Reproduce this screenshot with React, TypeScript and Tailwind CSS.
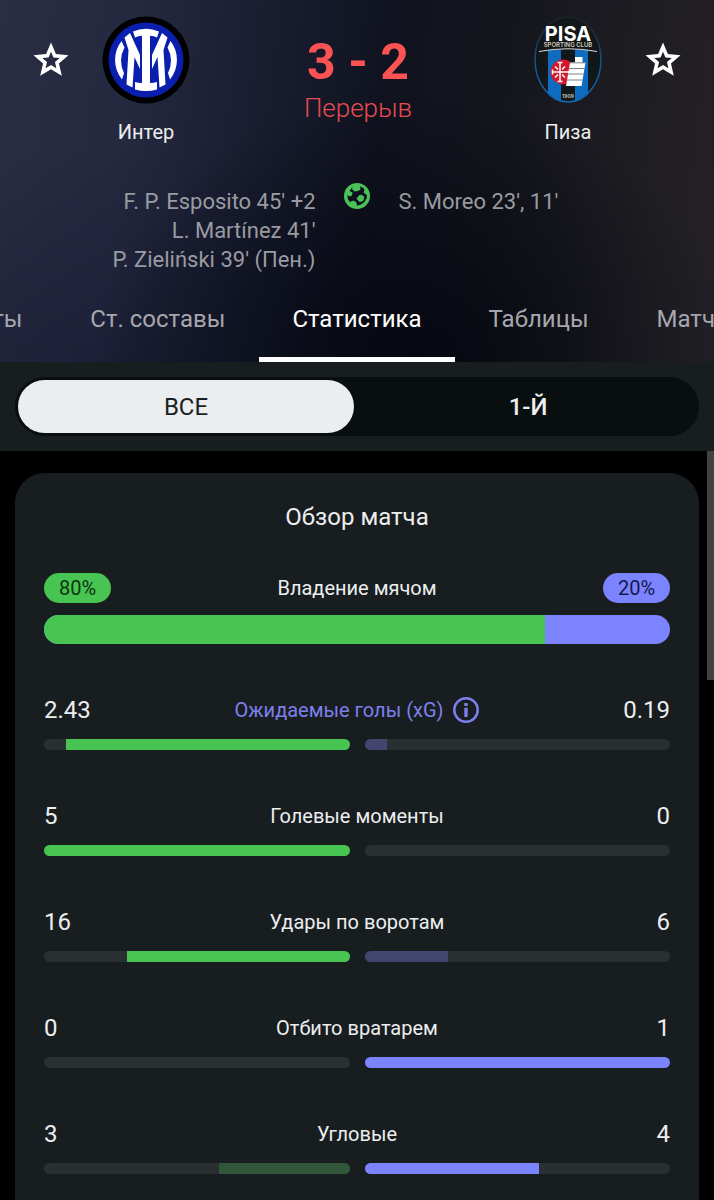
import React, { useState } from 'react';

type Stat = { label: string; home: string; away: string; info?: boolean };

const scorersHome = ["F. P. Esposito 45' +2", "L. Martínez 41'", "P. Zieliński 39' (Пен.)"];
const scorersAway = ["S. Moreo 23', 11'"];

const stats: Stat[] = [
  { label: 'Ожидаемые голы (xG)', home: '2.43', away: '0.19', info: true },
  { label: 'Голевые моменты', home: '5', away: '0' },
  { label: 'Удары по воротам', home: '16', away: '6' },
  { label: 'Отбито вратарем', home: '0', away: '1' },
  { label: 'Угловые', home: '3', away: '4' },
];

function InterLogo() {
  return (
    <svg viewBox="0 0 88 88" className="size-[88px]" aria-hidden="true">
      <circle cx="44" cy="44" r="43.5" fill="#000" />
      <circle cx="44" cy="44" r="37.5" fill="#0a1fae" />
      <g fill="#fff">
        <path d="M31 15.5Q44 10 57 15.5L55 21.5Q52 20 48 19.8V67Q52 67 55 66V73.500Q44 76.500 33 73.500V66Q36 67 40 67V19.800Q36 20 33 21.500Z" />
        <path d="M22.500 21.500L28 17L38 39V53L32.500 41L30.500 71.500L24.500 68.500L26.500 34Z" />
        <path d="M65.500 21.500L60 17L50 39V53L55.500 41L57.500 71.500L63.500 68.500L61.500 34Z" />
        <path d="M19.500 25A31 31 0 0 0 20 63.500L22 57A28 28 0 0 1 22.500 31.500Z" />
        <path d="M68.500 25A31 31 0 0 1 68 63.500L66 57A28 28 0 0 0 65.500 31.500Z" />
      </g>
    </svg>
  );
}

function PisaLogo() {
  return (
    <svg viewBox="0 0 68 88" className="h-[88px] w-[68px]" aria-hidden="true">
      <defs>
        <clipPath id="pisa-shield">
          <ellipse cx="34" cy="43.5" rx="33" ry="42.5" />
        </clipPath>
        <linearGradient id="pisa-edge" x1="0" y1="0" x2="0" y2="1">
          <stop offset="0" stopColor="#1d2427" />
          <stop offset="0.3" stopColor="#1a3a55" />
          <stop offset="0.55" stopColor="#14558d" />
          <stop offset="1" stopColor="#0f6bb8" />
        </linearGradient>
      </defs>
      <g clipPath="url(#pisa-shield)">
        <rect width="68" height="88" fill="#121719" />
        <path d="M14 34H27V88H14ZM41 34H54V88H41Z" fill="#0d6cc0" />
      </g>
      <ellipse cx="34" cy="43.5" rx="33" ry="42.5" fill="none" stroke="url(#pisa-edge)" strokeWidth="1.5" />
      <path d="M5 35.500Q34 30 63 35.500" fill="none" stroke="#d9dcdc" strokeWidth="1" />
      <text x="34" y="25" textAnchor="middle" fontFamily="Inter, sans-serif" fontWeight="700" fontSize="20" fill="#fff">PISA</text>
      <text x="34" y="31" textAnchor="middle" fontFamily="Inter, sans-serif" fontWeight="600" fontSize="6" fill="#d3cdbc">SPORTING CLUB</text>
      <circle cx="29" cy="56" r="12.500" fill="#d3182c" />
      <path d="M26 46V66M18 56H35M23.500 46.500H28.500M23.500 65.500H28.500M18.500 53.500V58.500M21 50.500L24 53.500M21 61.500L24 58.500M28 53.500L31 50.500M28 58.500L31 61.500" fill="none" stroke="#fff" strokeWidth="1.500" />
      <path d="M32 70L36 46.500L41 46V41H48.500V46.500H51.500L47.500 70Z" fill="#fff" />
      <path d="M36 46.800H51M34.500 52.500H50.500M33.500 58H49.500M32.500 64H48.500" stroke="#5d6466" strokeWidth="0.8" />
      <rect x="27.500" y="76" width="13" height="7" fill="#121719" />
      <text x="34" y="82" textAnchor="middle" fontFamily="Inter, sans-serif" fontWeight="600" fontSize="5" fill="#d3cdbc">1909</text>
    </svg>
  );
}

function BallIcon() {
  return (
    <svg viewBox="0 0 26 26" className="size-[26px]" aria-label="Голы" role="img">
      <circle cx="13" cy="13" r="13" fill="#4bc157" />
      <path
        d="M8.500 3.800L8 6L10.500 8.500L14 8L16.500 6.500L16 3.500L19.500 5L20.500 7L19.500 9.500L22.800 12V15L20.500 19L17 21.500L13 22.800L12.500 19.500L9.500 17.500L6 19L4 16.500L3.200 12L5.500 13.500L8 12.500L8.500 9.500L5.500 8Z"
        fill="#0e1120"
      />
      <path d="M16 12L19.600 13.500L19 17.600L15.500 18.600L13 15.500Z" fill="#4bc157" stroke="#4bc157" strokeLinejoin="round" />
    </svg>
  );
}

function InfoIcon() {
  return (
    <svg viewBox="0 0 26 26" className="size-[26px]" aria-hidden="true">
      <circle cx="13" cy="13" r="11.700" fill="none" stroke="currentColor" strokeWidth="2.500" />
      <path d="M11.300 6H14.700V9H11.300ZM11.300 10.800H14.700V20H11.300Z" fill="currentColor" />
    </svg>
  );
}

function Favorite({ team }: { team: string }) {
  return (
    <button type="button" aria-label={`В избранное: ${team}`} className="flex h-[88px] items-center justify-center text-white">
      <svg viewBox="0 0 24 24" className="size-[42px]" fill="currentColor" fillRule="evenodd" aria-hidden="true">
        <path d="M22 9.240L14.810 8.620L12 2L9.190 8.630L2 9.240L7.460 13.970L5.820 21L12 17.270L18.180 21L16.550 13.970ZM12 14.840L8.920 16.700L9.740 13.190L7.010 10.830L10.610 10.520L12 7.220L13.400 10.530L16.990 10.840L14.270 13.200L15.090 16.710Z" />
      </svg>
    </button>
  );
}

function Tab({ name, active }: { name: string; active?: boolean }) {
  return (
    <a
      href="#"
      className={
        active
          ? 'flex h-[88px] items-center border-b-[5px] border-white px-[33px] pt-[7px] whitespace-nowrap text-white'
          : 'flex h-[88px] items-center border-b-[5px] border-transparent px-[34px] pt-[7px] whitespace-nowrap text-[#a6a7ae]'
      }
    >
      {name}
    </a>
  );
}

function StatRow({ stat }: { stat: Stat }) {
  const home = Number(stat.home);
  const away = Number(stat.away);
  const share = (home / (home + away)) * 100;

  return (
    <div>
      <div className="grid h-[30px] grid-cols-[1fr_auto_1fr] items-center">
        <span className="text-2xl leading-[30px]">{stat.home}</span>
        {stat.info ? (
          <button type="button" className="flex items-center gap-[10px] text-xl leading-[30px] text-[#7c80ec]">
            {stat.label}
            <InfoIcon />
          </button>
        ) : (
          <span className="text-xl leading-[30px]">{stat.label}</span>
        )}
        <span className="text-right text-2xl leading-[30px]">{stat.away}</span>
      </div>
      <div className="mt-[14px] grid grid-cols-2 gap-[15px]">
        <div className="flex h-[11px] justify-end overflow-hidden rounded-full bg-[#2a2f32]">
          <div className={home >= away ? 'bg-[#48c452]' : 'bg-[#31573a]'} style={{ width: `${share}%` }} />
        </div>
        <div className="flex h-[11px] overflow-hidden rounded-full bg-[#2a2f32]">
          <div className={away >= home ? 'bg-[#7b83fe]' : 'bg-[#42456d]'} style={{ width: `${100 - share}%` }} />
        </div>
      </div>
    </div>
  );
}

export default function App() {
  const [period, setPeriod] = useState('ВСЕ');

  return (
    <div className="flex h-screen flex-col overflow-hidden bg-black font-[Roboto,sans-serif] text-[#eceeef]">
      <header className="bg-[radial-gradient(ellipse_45%_75%_at_58%_100%,#050810_0%,#05081000_100%),radial-gradient(ellipse_60%_70%_at_15%_110%,#14183099_0%,#14183000_100%),linear-gradient(97deg,#2a2d43_0%,#252940_18%,#1a1d30_36%,#10131f_52%,#15161d_68%,#211f24_90%,#232126_100%)]">
        <div className="grid grid-cols-[102px_88px_1fr_88px_102px] pt-4">
          <Favorite team="Интер" />
          <div className="flex flex-col items-center">
            <InterLogo />
            <span className="mt-4 text-xl leading-6">Интер</span>
          </div>
          <div className="mt-[18px] pl-0.5 text-center text-[#fb5254]">
            <div className="text-[50px] leading-14 font-bold">3 - 2</div>
            <div className="text-[26px] leading-9 font-light text-[#e84c52]">Перерыв</div>
          </div>
          <div className="flex flex-col items-center">
            <PisaLogo />
            <span className="mt-4 text-xl leading-6">Пиза</span>
          </div>
          <Favorite team="Пиза" />
        </div>

        <div className="mt-[39px] grid grid-cols-[1fr_83px_1fr] text-[22px] leading-[29px] text-[#9a9ba2]">
          <ul className="pt-1 text-right">
            {scorersHome.map((s) => <li key={s}>{s}</li>)}
          </ul>
          <div className="flex justify-center">
            <BallIcon />
          </div>
          <ul className="pt-1">
            {scorersAway.map((s) => <li key={s}>{s}</li>)}
          </ul>
        </div>

        <nav className="grid grid-cols-[1fr_auto_1fr] text-2xl">
          <div className="flex justify-end overflow-hidden">
            <Tab name="Факты" />
            <Tab name="Ст. составы" />
          </div>
          <Tab name="Статистика" active />
          <div className="flex overflow-hidden">
            <Tab name="Таблицы" />
            <Tab name="Матчи" />
          </div>
        </nav>
      </header>

      <div className="bg-[#181d20] p-[15px]">
        <div className="grid h-[59px] grid-cols-2 gap-1.5 rounded-full bg-[#090e0f] p-[3px] text-2xl">
          {['ВСЕ', '1-Й'].map((p) => (
            <button
              key={p}
              type="button"
              onClick={() => setPeriod(p)}
              className={p === period ? 'rounded-full bg-[#ebedef] text-[#1a1f22]' : 'rounded-full font-medium text-[#eceeef]'}
            >
              {p}
            </button>
          ))}
        </div>
      </div>

      <main className="relative flex-1 overflow-hidden px-[15px] pt-[22px]">
        <section className="min-h-full rounded-t-[30px] bg-[#181d20] px-[29px] pt-7">
          <h2 className="text-center text-2xl leading-8">Обзор матча</h2>

          <div className="mt-10 grid grid-cols-[1fr_auto_1fr] items-center text-xl leading-[30px]">
            <span className="w-[67px] rounded-full bg-[#48c452] text-center text-[#0c3512]">80%</span>
            <span>Владение мячом</span>
            <span className="w-[67px] justify-self-end rounded-full bg-[#7b83fe] text-center text-[#151a4c]">20%</span>
          </div>
          <div className="mt-3 flex h-[29px] overflow-hidden rounded-full bg-[#7b83fe]">
            <div className="w-4/5 bg-[#48c452]" />
          </div>

          <div className="mt-[51px] space-y-[51px]">
            {stats.map((stat) => <StatRow key={stat.label} stat={stat} />)}
          </div>
        </section>
        {/* scroll thumb */}
        <div className="absolute top-0 right-0 h-[229px] w-[7px] bg-[#424242]" />
      </main>
    </div>
  );
}
